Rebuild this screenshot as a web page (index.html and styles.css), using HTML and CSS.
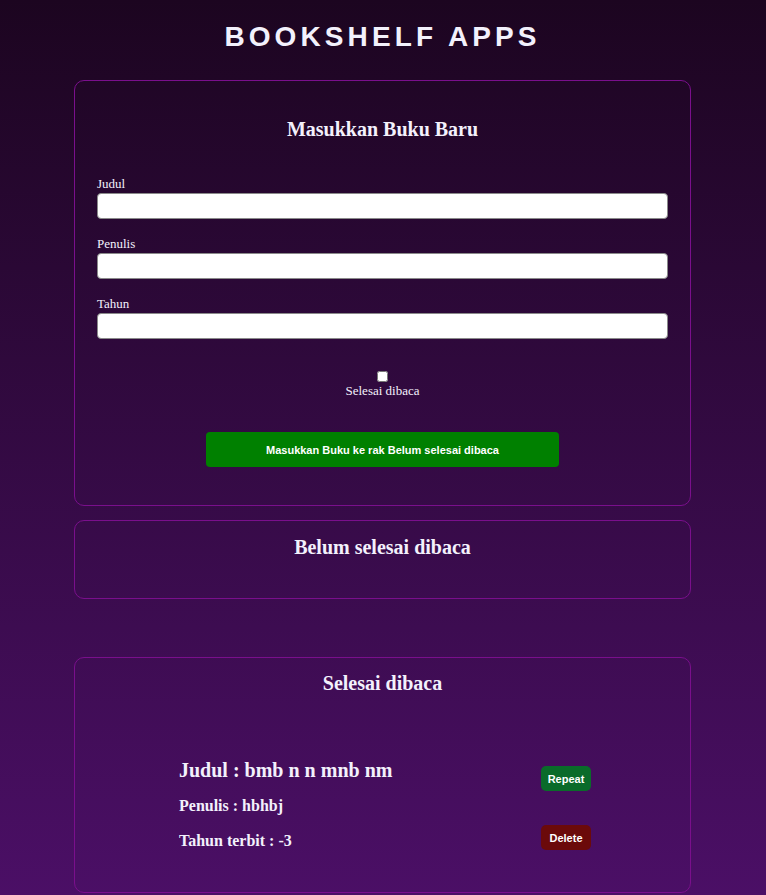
FILE: index.html
```html
<!DOCTYPE html>
<html lang="id">
<head>
<meta charset="utf-8">
<title>Bookshelf Apps</title>
<link rel="stylesheet" href="styles.css">
</head>
<body>
<header class="head">
  <h1 class="brand">BOOKSHELF APPS</h1>
</header>
<main class="main">
  <section class="card card-input">
    <h2 class="card-title title-input">Masukkan Buku Baru</h2>
    <form class="form">
      <div class="field">
        <label class="label" for="judul">Judul</label>
        <input class="input" id="judul" type="text">
      </div>
      <div class="field">
        <label class="label" for="penulis">Penulis</label>
        <input class="input" id="penulis" type="text">
      </div>
      <div class="field">
        <label class="label" for="tahun">Tahun</label>
        <input class="input" id="tahun" type="number">
      </div>
      <div class="check">
        <input class="checkbox" id="selesai" type="checkbox">
        <label class="label" for="selesai">Selesai dibaca</label>
      </div>
      <button class="submit" type="button">Masukkan Buku ke rak Belum selesai dibaca</button>
    </form>
  </section>
  <section class="card card-unread">
    <h2 class="card-title">Belum selesai dibaca</h2>
    <div class="list"></div>
  </section>
  <section class="card card-read">
    <h2 class="card-title">Selesai dibaca</h2>
    <div class="list list-read">
      <article class="book">
        <div class="book-info">
          <h3 class="book-title">Judul : bmb n n mnb nm</h3>
          <p class="book-meta">Penulis : hbhbj</p>
          <p class="book-meta">Tahun terbit : -3</p>
        </div>
        <div class="book-actions">
          <button class="btn btn-green" type="button">Repeat</button>
          <button class="btn btn-red" type="button">Delete</button>
        </div>
      </article>
    </div>
  </section>
</main>
</body>
</html>
```
FILE: styles.css
```css
html {
  background: linear-gradient(to bottom, #1c0520 0%, #4b0f66 100%) fixed;
  min-height: 100%;
}
body {
  margin: 0;
  color: #f3f1fc;
  font-family: "Liberation Serif", "Times New Roman", serif;
}
.head {
  padding-top: 21px;
  text-align: center;
}
.brand {
  margin: 0;
  font-family: "Liberation Sans", Arial, sans-serif;
  font-size: 28px;
  line-height: 32px;
  font-weight: 700;
  letter-spacing: 4.1px;
  padding-right: 1px;
}
.main {
  width: 617px;
  margin: 27px 0 0 calc(50% - 309px);
  display: flex;
  flex-direction: column;
}
.card {
  border: 1px solid #7a0f8c;
  border-radius: 10px;
  padding: 0 22px;
}
.card-title {
  margin: 0;
  text-align: center;
  font-size: 20px;
  line-height: 23px;
  font-weight: 700;
}
.card-input {
  padding-top: 37px;
  padding-bottom: 38px;
}
.form {
  display: flex;
  flex-direction: column;
  margin-top: 35px;
}
.field {
  display: flex;
  flex-direction: column;
  margin-bottom: 17px;
}
.label {
  font-size: 13px;
  line-height: 15px;
}
.field .label {
  margin-bottom: 2px;
}
.input {
  box-sizing: border-box;
  height: 26px;
  width: 100%;
  margin: 0;
  background: #fff;
  border: 1px solid #8a8a8a;
  border-radius: 4px;
  padding: 2px 6px;
}
.check {
  display: flex;
  flex-direction: column;
  align-items: center;
  margin-top: 15px;
}
.checkbox {
  width: 11px;
  height: 11px;
  margin: 0 0 1px;
}
.submit {
  align-self: center;
  width: 353px;
  height: 35px;
  margin-top: 34px;
  background: #008000;
  color: #fff;
  border: none;
  border-radius: 4px;
  font-family: "Liberation Sans", Arial, sans-serif;
  font-size: 11px;
  font-weight: 700;
}
.card-unread {
  margin-top: 14px;
  padding-top: 15px;
  padding-bottom: 39px;
}
.card-read {
  margin-top: 58px;
  padding-top: 14px;
  padding-bottom: 42px;
}
.list-read {
  margin-top: 64px;
}
.book {
  display: flex;
  justify-content: space-between;
  width: 412px;
  margin-left: 82px;
}
.book-title {
  margin: 0;
  font-size: 20px;
  line-height: 23px;
  font-weight: 700;
}
.book-meta {
  margin: 15px 0 0;
  font-size: 16px;
  line-height: 18px;
  font-weight: 700;
}
.book-meta + .book-meta {
  margin-top: 17px;
}
.book-actions {
  display: flex;
  flex-direction: column;
  gap: 34px;
  padding-top: 7px;
}
.btn {
  width: 50px;
  height: 25px;
  border: none;
  border-radius: 5px;
  color: #fff;
  font-family: "Liberation Sans", Arial, sans-serif;
  font-size: 11px;
  font-weight: 700;
  padding: 0;
}
.btn-green {
  background: #0a6b2a;
}
.btn-red {
  background: #6b0a0a;
}
```
